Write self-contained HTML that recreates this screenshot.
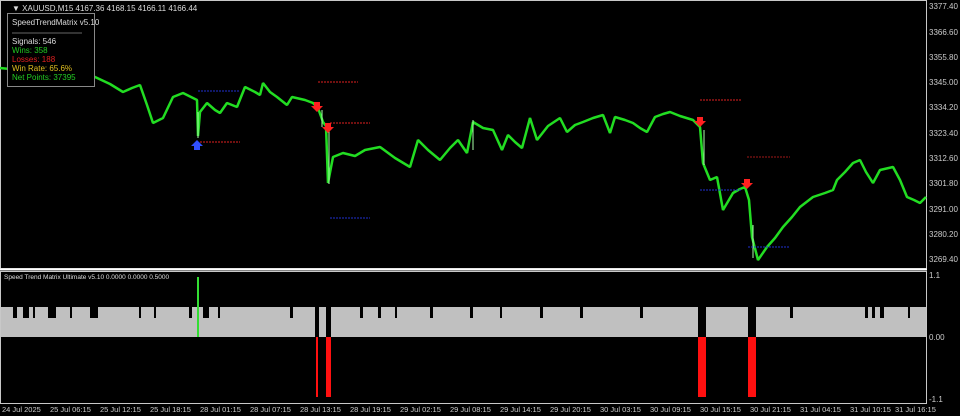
<!DOCTYPE html><html><head><style>
html,body{margin:0;background:#000;width:960px;height:416px;overflow:hidden;font-family:"Liberation Sans",sans-serif}
svg{display:block}
</style></head><body>
<svg width="960" height="416" xmlns="http://www.w3.org/2000/svg" font-family="Liberation Sans, sans-serif">
<rect width="960" height="416" fill="#000"/>
<rect x="0.5" y="0.5" width="926" height="268" fill="none" stroke="#c8c8c8"/>
<rect x="0.5" y="271.5" width="926" height="132" fill="none" stroke="#c8c8c8"/>
<line x1="0" y1="269.5" x2="927" y2="269.5" stroke="#fff" stroke-width="2"/>
<polyline fill="none" stroke="#22dd22" stroke-width="2.5" stroke-linejoin="bevel" points="0,68 20,70 40,74 60,72 80,78 95,77 110,84 123,92 132,88 140,85 147,105 153,123 163,118 173,97 183,93 197,100 198,136 200,112 207,103 215,110 220,113 227,103 237,107 245,87 255,92 260,95 263,83 270,92 277,97 287,105 292,97 305,100 313,103 318,108 323,122 326,126 328,183 333,157 343,153 355,156 365,150 380,147 395,158 410,167 418,140 428,150 440,160 450,148 458,140 467,153 473,122 483,128 493,130 502,150 508,135 515,142 522,148 530,118 537,140 548,126 560,118 567,132 575,125 583,122 593,118 603,115 610,133 615,117 625,120 633,123 640,128 647,132 655,117 663,114 670,112 680,116 693,120 700,127 703,163 710,180 717,177 723,210 733,193 740,189 745,187 749,200 752,237 758,260 767,247 775,238 783,227 792,217 800,207 813,197 825,193 833,190 837,180 845,172 853,163 860,160 866,172 873,183 880,170 893,167 900,180 907,197 914,200 920,203 926,197"/>
<g stroke="#aaffaa" stroke-width="1">
<line x1="198" y1="112" x2="198" y2="138"/><line x1="329" y1="130" x2="329" y2="184"/><line x1="753" y1="225" x2="753" y2="258"/><line x1="704" y1="130" x2="704" y2="165"/><line x1="473" y1="120" x2="473" y2="150"/><line x1="322" y1="110" x2="322" y2="127"/>
</g>
<g stroke-width="1" stroke-dasharray="2 1">
<line x1="318" y1="82" x2="358" y2="82" stroke="#e02020"/>
<line x1="330" y1="123" x2="370" y2="123" stroke="#e02020"/>
<line x1="200" y1="142" x2="240" y2="142" stroke="#e02020"/>
<line x1="700" y1="100" x2="742" y2="100" stroke="#e02020"/>
<line x1="747" y1="157" x2="790" y2="157" stroke="#a01818"/>
<line x1="198" y1="91" x2="240" y2="91" stroke="#2030d0"/>
<line x1="330" y1="218" x2="370" y2="218" stroke="#2030d0"/>
<line x1="700" y1="190" x2="742" y2="190" stroke="#2030d0"/>
<line x1="748" y1="247" x2="790" y2="247" stroke="#2030d0"/>
</g>
<g fill="#ff2020">
<path d="M314,102h6v4h3l-6,6-6-6h3z"/>
<path d="M325,123h6v4h3l-6,6-6-6h3z"/>
<path d="M697,117h6v4h3l-6,6-6-6h3z"/>
<path d="M744,179h6v4h3l-6,6-6-6h3z"/>
</g>
<path fill="#3050ff" d="M197,140l6,6h-3v4h-6v-4h-3z"/>
<text x="12" y="11" fill="#ddd" font-size="8">▼ XAUUSD,M15  4167.36 4168.15 4166.11 4166.44</text>
<rect x="7.5" y="13.5" width="87" height="73" fill="#000" stroke="#888"/>
<text x="12" y="25" fill="#ddd" font-size="8">SpeedTrendMatrix v5.10</text>
<line x1="12" y1="33" x2="82" y2="33" stroke="#666"/>
<text x="12" y="44" fill="#ddd" font-size="8">Signals: 546</text>
<text x="12" y="53" fill="#22cc22" font-size="8">Wins: 358</text>
<text x="12" y="62" fill="#e02020" font-size="8">Losses: 188</text>
<text x="12" y="71" fill="#e0c020" font-size="8">Win Rate: 65.6%</text>
<text x="12" y="80" fill="#22cc22" font-size="8">Net Points: 37395</text>
<g fill="#ccc" font-size="8">
<text x="929" y="9">3377.40</text><text x="929" y="35">3366.60</text><text x="929" y="60">3355.80</text>
<text x="929" y="85">3345.00</text><text x="929" y="110">3334.20</text><text x="929" y="136">3323.40</text>
<text x="929" y="161">3312.60</text><text x="929" y="186">3301.80</text><text x="929" y="212">3291.00</text>
<text x="929" y="237">3280.20</text><text x="929" y="262">3269.40</text>
<text x="929" y="278">1.1</text><text x="929" y="340">0.00</text><text x="929" y="402">-1.1</text>
</g>
<text x="4" y="279" fill="#ddd" font-size="6.5">Speed Trend Matrix Ultimate v5.10 0.0000 0.0000 0.5000</text>
<rect x="1" y="307" width="925" height="30" fill="#c0c0c0"/>
<g fill="#000">
<rect x="13" y="307" width="4" height="11"/><rect x="23" y="307" width="6" height="11"/><rect x="33" y="307" width="2" height="11"/>
<rect x="48" y="307" width="8" height="11"/><rect x="70" y="307" width="2" height="11"/><rect x="90" y="307" width="8" height="11"/>
<rect x="139" y="307" width="2" height="11"/><rect x="154" y="307" width="2" height="11"/><rect x="189" y="307" width="3" height="11"/>
<rect x="203" y="307" width="6" height="11"/><rect x="218" y="307" width="2" height="11"/><rect x="290" y="307" width="3" height="11"/>
<rect x="315" y="307" width="4" height="30"/><rect x="326" y="307" width="5" height="30"/>
<rect x="360" y="307" width="3" height="11"/><rect x="378" y="307" width="3" height="11"/><rect x="395" y="307" width="2" height="11"/>
<rect x="430" y="307" width="3" height="11"/><rect x="470" y="307" width="3" height="11"/><rect x="500" y="307" width="2" height="11"/>
<rect x="540" y="307" width="3" height="11"/><rect x="580" y="307" width="3" height="11"/><rect x="640" y="307" width="3" height="11"/>
<rect x="698" y="307" width="8" height="30"/><rect x="748" y="307" width="8" height="30"/>
<rect x="790" y="307" width="3" height="11"/><rect x="865" y="307" width="3" height="11"/><rect x="872" y="307" width="3" height="11"/>
<rect x="880" y="307" width="4" height="11"/><rect x="908" y="307" width="2" height="11"/>
</g>
<rect x="197" y="277" width="2" height="60" fill="#33dd33"/>
<g fill="#ff1010">
<rect x="316" y="337" width="2" height="60"/><rect x="326" y="337" width="5" height="60"/>
<rect x="698" y="337" width="8" height="60"/><rect x="748" y="337" width="8" height="60"/>
</g>
<g fill="#ccc" font-size="7.5">
<text x="2" y="412">24 Jul 2025</text><text x="50" y="412">25 Jul 06:15</text><text x="100" y="412">25 Jul 12:15</text>
<text x="150" y="412">25 Jul 18:15</text><text x="200" y="412">28 Jul 01:15</text><text x="250" y="412">28 Jul 07:15</text>
<text x="300" y="412">28 Jul 13:15</text><text x="350" y="412">28 Jul 19:15</text><text x="400" y="412">29 Jul 02:15</text>
<text x="450" y="412">29 Jul 08:15</text><text x="500" y="412">29 Jul 14:15</text><text x="550" y="412">29 Jul 20:15</text>
<text x="600" y="412">30 Jul 03:15</text><text x="650" y="412">30 Jul 09:15</text><text x="700" y="412">30 Jul 15:15</text>
<text x="750" y="412">30 Jul 21:15</text><text x="800" y="412">31 Jul 04:15</text><text x="850" y="412">31 Jul 10:15</text>
<text x="895" y="412">31 Jul 16:15</text>
</g>
</svg>
</body></html>
